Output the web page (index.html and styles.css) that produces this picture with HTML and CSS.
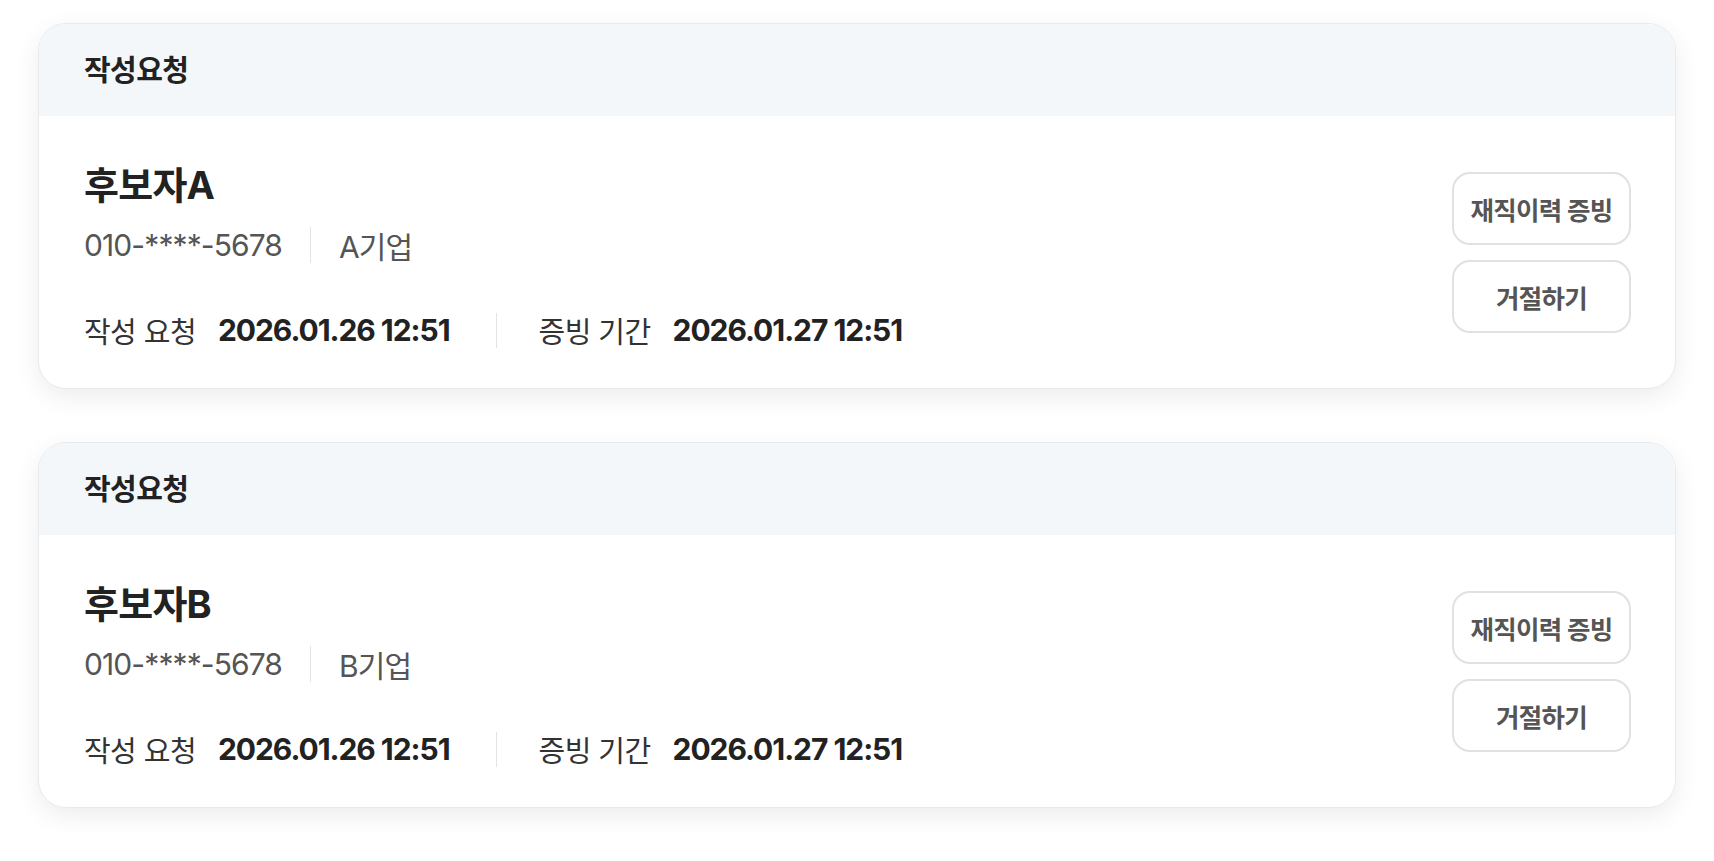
FILE: index.html
```html
<!DOCTYPE html>
<html lang="ko">
<head>
<meta charset="utf-8">
<title>작성요청</title>
<link rel="stylesheet" href="styles.css">
</head>
<body>
<main class="list">
  <section class="card">
    <div class="card-head">작성요청</div>
    <div class="card-body">
      <div class="info">
        <h2 class="name">후보자A</h2>
        <div class="meta">
          <span class="phone">010-****-5678</span>
          <span class="sep"></span>
          <span class="company">A기업</span>
        </div>
        <div class="dates">
          <span class="label">작성 요청</span>
          <span class="value">2026.01.26 12:51</span>
          <span class="sep sep-date"></span>
          <span class="label">증빙 기간</span>
          <span class="value">2026.01.27 12:51</span>
        </div>
      </div>
      <div class="actions">
        <button class="btn">재직이력 증빙</button>
        <button class="btn">거절하기</button>
      </div>
    </div>
  </section>
  <section class="card">
    <div class="card-head">작성요청</div>
    <div class="card-body">
      <div class="info">
        <h2 class="name">후보자B</h2>
        <div class="meta">
          <span class="phone">010-****-5678</span>
          <span class="sep"></span>
          <span class="company">B기업</span>
        </div>
        <div class="dates">
          <span class="label">작성 요청</span>
          <span class="value">2026.01.26 12:51</span>
          <span class="sep sep-date"></span>
          <span class="label">증빙 기간</span>
          <span class="value">2026.01.27 12:51</span>
        </div>
      </div>
      <div class="actions">
        <button class="btn">재직이력 증빙</button>
        <button class="btn">거절하기</button>
      </div>
    </div>
  </section>
</main>
</body>
</html>
```

FILE: styles.css
```css
* { box-sizing: border-box; }

html, body {
  margin: 0;
  background: #ffffff;
}

body {
  font-family: Inter, "Noto Sans CJK KR", sans-serif;
  color: #222;
}

.list {
  display: flex;
  flex-direction: column;
  gap: 53px;
  padding: 23px 38px;
}

.card {
  background: #fff;
  border: 1px solid #e8eaec;
  border-radius: 28px;
  overflow: hidden;
  box-shadow: 0 8px 26px rgba(0, 0, 0, 0.075);
}

.card-head {
  height: 92px;
  display: flex;
  align-items: center;
  padding: 0 45px 4px;
  background: #f4f7f9;
  font-size: 29px;
  font-weight: 600;
  letter-spacing: -0.02em;
  color: #222;
}

.card-body {
  display: flex;
  align-items: center;
  justify-content: space-between;
  padding: 47px 44px 38px 45px;
}

.info {
  display: flex;
  flex-direction: column;
}

.name {
  margin: 0;
  font-size: 38px;
  line-height: 44px;
  font-weight: 700;
  letter-spacing: -0.02em;
  color: #222;
}

.meta {
  margin-top: 18px;
  display: flex;
  align-items: center;
  height: 40px;
  font-size: 30px;
  letter-spacing: -0.03em;
  color: #555;
}

.sep {
  display: block;
  width: 1px;
  height: 36px;
  background: #e4e4e4;
  margin: 0 28px;
}

.dates {
  margin-top: 45px;
  display: flex;
  align-items: center;
  height: 40px;
  font-size: 29px;
  letter-spacing: -0.02em;
}

.label {
  color: #333;
  margin-right: 22px;
}

.value {
  font-size: 30px;
  font-weight: 700;
  letter-spacing: -0.035em;
  color: #222;
}

.sep-date {
  height: 35px;
  margin: 0 42px 0 46px;
}

.actions {
  display: flex;
  flex-direction: column;
  gap: 15px;
  margin-bottom: 8px;
}

.btn {
  width: 179px;
  height: 73px;
  border: 2px solid #dfe1e3;
  border-radius: 18px;
  background: #fff;
  font-family: Inter, "Noto Sans CJK KR", sans-serif;
  font-size: 25.5px;
  font-weight: 600;
  letter-spacing: -0.03em;
  color: #555;
  padding: 0;
}
```
